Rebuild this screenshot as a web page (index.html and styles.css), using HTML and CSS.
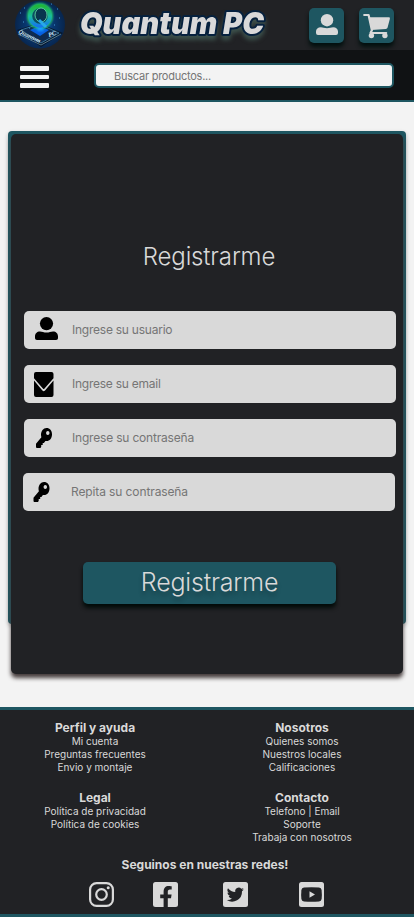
FILE: index.html
```html
<!DOCTYPE html>
<html lang="es">
<head>
<meta charset="utf-8">
<meta name="viewport" content="width=device-width, initial-scale=1">
<title>Quantum PC</title>
<link rel="stylesheet" href="styles.css">
</head>
<body>
<header class="header">
  <svg class="emblem" viewBox="0 0 50 50">
    <defs>
      <radialGradient id="orb"><stop offset="0" stop-color="#125cb8"/><stop offset=".55" stop-color="#083770"/><stop offset="1" stop-color="#08254c"/></radialGradient>
      <linearGradient id="ring" x1="0" y1="0" x2="0" y2="1"><stop offset="0" stop-color="#20b63c"/><stop offset=".5" stop-color="#19bd9d"/><stop offset="1" stop-color="#1478ea"/></linearGradient>
      <filter id="glow" x="-50%" y="-50%" width="200%" height="200%"><feGaussianBlur stdDeviation="1.3"/></filter>
      <clipPath id="round"><ellipse cx="25" cy="24.500" rx="25" ry="24"/></clipPath>
    </defs>
    <g clip-path="url(#round)">
      <rect width="50" height="50" fill="url(#orb)"/>
      <path d="M2 30 24 23l24 10-22 14Z" fill="#07172c"/>
      <path d="m6 30 18-6 20 9-18 10Z" fill="#0e2b50" stroke="#54a4cf" stroke-width=".6"/>
      <path d="m3 34 23 11 20-11" fill="none" stroke="#57798d" stroke-width="1"/>
      <path d="m15 30 9-4 10 4-9 6Z" fill="#075fe0"/>
      <g filter="url(#glow)"><circle cx="25" cy="16" r="11" fill="none" stroke="#20c76d" stroke-width="4"/><path d="m25 23-3 8h7Z" fill="#149cff"/></g>
      <circle cx="25" cy="16" r="9.8" fill="#0a4f61" stroke="url(#ring)" stroke-width="4"/>
      <ellipse cx="26" cy="15" rx="6" ry="7" fill="#09364f" stroke="#69e7a7" stroke-width=".8"/>
      <path d="m24 20 7 7" stroke="#28a9e8" stroke-width="3"/>
      <path d="M5 13h1m3-5h1m4 20h1M42 9h1m1 9h1M39 25h1M8 22h1M36 4h1" stroke="#439ad6"/>
      <text class="emblem-text" transform="translate(3 33) rotate(25)">Quantum</text>
      <text class="emblem-text" transform="translate(34 37) rotate(-18)">PC</text>
    </g>
  </svg>
  <svg class="brand" viewBox="0 0 200 50" role="img" aria-label="Quantum PC">
    <text class="brand-text" x="10" y="34" textLength="184" lengthAdjust="spacingAndGlyphs">Quantum PC</text>
  </svg>
  <div class="actions">
    <button class="action" aria-label="Cuenta"><svg viewBox="0 0 35 35"><circle cx="18" cy="12.2" r="6.2"/><path d="M7 25v-1.5c0-2.6 2-4.3 4.8-4.3 2.2 0 3.5 1 6.2 1s4-1 6.2-1c2.8 0 4.800 1.700 4.800 4.300V25q0 2-2 2H9q-2 0-2-2Z"/></svg></button>
    <button class="action" aria-label="Carrito"><svg viewBox="0 0 35 35"><path d="M10 9.300h19.800q1.400 0 1.100 1.400l-2.300 8.800q-.3 1.400-1.800 1.500l-14.300.9Z"/><path class="cart-line" d="M5.200 7h4.400l3.300 15.200-1.400 2.800h15.700"/><circle cx="12.400" cy="27.600" r="2.700"/><circle cx="25.900" cy="27.600" r="2.700"/></svg></button>
  </div>
</header>
<nav class="nav">
  <button class="menu" aria-label="Menú"><i></i><i></i><i></i></button>
  <input class="search" type="text" placeholder="Buscar productos...">
</nav>
<main class="main">
  <section class="frame">
    <form class="card">
      <h1 class="title">Registrarme</h1>
      <label class="field"><svg class="field-icon" viewBox="0 0 48 38"><circle cx="22.5" cy="12.6" r="6.6"/><path d="M11 27.2v-1.8c0-3 2-5 5-5 2.2 0 3.7 1.1 6.5 1.1s4.3-1.1 6.5-1.1c3 0 5 2 5 5v1.8q0 1.8-2 1.8H13q-2 0-2-1.8Z"/></svg><input class="w-user" type="text" placeholder="Ingrese su usuario"></label>
      <label class="field"><svg class="field-icon" viewBox="0 0 48 38"><path d="M12 7h15.500q2 0 2 2v4.200L20.300 23.700q-.600.700-1.200 0L10 13.200V9q0-2 2-2Z"/><path d="m10 15.600 8.400 9.900q1.300 1.300 2.600 0l8.500-9.900V30q0 2-2 2H12q-2 0-2-2Z"/></svg><input class="w-email" type="text" placeholder="Ingrese su email"></label>
      <label class="field"><svg class="field-icon" viewBox="0 0 48 38"><path fill-rule="evenodd" d="M22.500 9c3.300 0 5.500 2.600 5.500 6.200 0 4-2.300 6.800-5.400 6.800l-1.200-.1-1.500 2h-1.200v2h-1.500v2.200l-.8.9H13q-1 0-1-1v-3.200l5.400-6.600A7.700 7.700 0 0 1 17 16c0-4 2.300-7 5.500-7Zm1.300 3c-1 0-1.700.9-1.700 2s.7 2 1.700 2 1.700-.9 1.700-2-.7-2-1.700-2Z"/></svg><input class="w-pass" type="text" placeholder="Ingrese su contraseña"></label>
      <label class="field repeat"><svg class="field-icon" viewBox="1.500 0 48 38"><path fill-rule="evenodd" d="M22.500 9c3.300 0 5.500 2.600 5.500 6.200 0 4-2.300 6.800-5.400 6.800l-1.200-.1-1.500 2h-1.200v2h-1.500v2.200l-.8.9H13q-1 0-1-1v-3.200l5.400-6.600A7.700 7.700 0 0 1 17 16c0-4 2.300-7 5.500-7Zm1.300 3c-1 0-1.700.9-1.700 2s.7 2 1.700 2 1.700-.9 1.700-2-.7-2-1.700-2Z"/></svg><input class="w-repeat" type="text" placeholder="Repita su contraseña"></label>
      <button class="submit" type="button">Registrarme</button>
    </form>
  </section>
</main>
<footer class="footer">
  <div class="links">
    <section><h2>Perfil y ayuda</h2><p>Mi cuenta</p><p>Preguntas frecuentes</p><p>Envio y montaje</p></section>
    <section><h2>Nosotros</h2><p>Quienes somos</p><p>Nuestros locales</p><p>Calificaciones</p></section>
    <section><h2>Legal</h2><p>Política de privacidad</p><p>Política de cookies</p></section>
    <section><h2>Contacto</h2><p>Telefono | Email</p><p>Soporte</p><p>Trabaja con nosotros</p></section>
  </div>
  <h2 class="follow">Seguinos en nuestras redes!</h2>
  <div class="social">
    <svg viewBox="0 0 25 25"><rect class="line" x="1.1" y="1.1" width="22.8" height="22.8" rx="6.5"/><circle class="line" cx="12.5" cy="12.5" r="5.3"/><circle cx="19.2" cy="5.8" r="1.5"/></svg>
    <svg viewBox="0 0 25 25"><rect width="25" height="25" rx="2.5"/><path class="cut" d="M10.600 25v-8.800H7.200v-3.700h3.400V9.700c0-3.700 2-5.700 5.100-5.700 1.500 0 3 .3 3 .3v3.300H17c-1.700 0-2.200 1-2.200 2.100v2.800h3.800l-.600 3.700h-3.200V25Z"/></svg>
    <svg viewBox="0 0 25 25"><rect width="25" height="25" rx="2.5"/><path class="cut" d="M21 7.2c-.6.3-1.3.5-2 .6.7-.4 1.3-1.1 1.5-1.9-.7.4-1.4.7-2.2.8a3.5 3.5 0 0 0-6 3.2A9.9 9.9 0 0 1 5 6.2a3.5 3.5 0 0 0 1.1 4.7c-.6 0-1.1-.2-1.6-.4 0 1.7 1.2 3.1 2.8 3.4-.5.2-1 .2-1.6.1.4 1.4 1.7 2.4 3.3 2.4A7 7 0 0 1 3.8 18 9.9 9.9 0 0 0 19 9.2c.8-.5 1.5-1.200 2-2Z"/></svg>
    <svg viewBox="0 0 25 25"><rect width="25" height="25" rx="2.5"/><path class="cut" d="M5 5.600q7.500-.8 15 0 2.300.3 2.600 2.400.5 4.500 0 9-.3 2.200-2.600 2.500-7.500.7-15 0-2.300-.3-2.600-2.500-.5-4.500 0-9Q2.700 5.900 5 5.600Z"/><path d="m10.500 9.300 5.500 3.200-5.500 3.200Z"/></svg>
  </div>
</footer>
</body>
</html>
```
FILE: styles.css
```css
* { box-sizing: border-box; }
body { margin: 0; width: 414px; height: 917px; display: flex; flex-direction: column; background: #f3f3f3; font-family: Inter, "Liberation Sans", sans-serif; color: #d9d9d9; overflow: hidden; }
h1, h2, p { margin: 0; }
button { border: 0; padding: 0; font-family: inherit; color: inherit; }

.header { height: 50px; display: flex; padding-left: 15px; background: #212225; flex: none; }
.emblem { width: 50px; height: 50px; }
.emblem-text { font: italic bold 6px "Liberation Serif", serif; fill: #d9f0ff; }
.brand { width: 200px; height: 50px; margin-left: 5px; }
.brand-text { font: italic 900 30px Inter, sans-serif; fill: #d9d9d9; stroke: #06213e; stroke-width: 4px; stroke-linejoin: round; paint-order: stroke; filter: drop-shadow(0 4px 2px #49685faa); }
.actions { display: flex; gap: 15px; margin: 8px 0 0 39px; }
.action { width: 35px; height: 35px; border-radius: 5px; background: #1e5661; box-shadow: 0 4px 4px #02100f; }
.action svg { display: block; width: 35px; height: 35px; fill: #d9d9d9; }
.action .cart-line { fill: none; stroke: #d9d9d9; stroke-width: 2.200; stroke-linecap: round; stroke-linejoin: round; }

.nav { height: 52px; flex: none; display: flex; background: #101214; border-bottom: 2px solid #1e5661; padding-left: 20px; }
.menu { width: 29px; height: 22px; margin-top: 16px; background: none; display: flex; flex-direction: column; justify-content: space-between; }
.menu i { width: 29px; height: 4.600px; border-radius: 1px; background: #f3f3f3; }
.search { width: 300px; height: 25px; margin: 13px 0 0 45px; padding: 0 18px; border: 2px solid #1e5661; border-radius: 5px; background: #f3f3f3; font: 11px Inter, sans-serif; letter-spacing: -.24px; }
input::placeholder { color: #757575; opacity: 1; }

.main { height: 605px; flex: none; padding: 29px 8px 0; }
.frame { width: 398px; height: 493px; padding: 3px; background: #1e5661; border-radius: 4px; box-shadow: 0 2px 4px #0004; }
.card { width: 392px; height: 540px; display: flex; flex-direction: column; gap: 16px; padding: 108px 0 0 13px; background: #212225; border-radius: 5px; box-shadow: 0 4px 4px #453c3c; }
.title { width: 370px; height: 30px; margin-bottom: 23px; font-size: 24px; font-weight: 350; line-height: 30px; letter-spacing: -.15px; text-align: center; }
.field { width: 372px; height: 38px; flex: none; display: flex; background: #d9d9d9; border-radius: 5px; overflow: hidden; }
.repeat { margin-left: -1px; }
.field-icon { width: 48px; height: 38px; flex: none; }
.field input { border: 0; padding: 0 0 2px; background: none; width: 324px; font: 12px Inter, sans-serif; }
.field .w-user { letter-spacing: -.24px; }
.field .w-email { letter-spacing: -.25px; }
.field .w-pass { letter-spacing: -.19px; }
.field .w-repeat { letter-spacing: -.11px; }
.submit { width: 253px; height: 42px; flex: none; margin: 35px 0 0 59px; padding-bottom: 3px; border-radius: 5px; background: #1e5661; box-shadow: 0 4px 4px #020b09; font-size: 25px; font-weight: 350; letter-spacing: -.2px; text-shadow: 0 4px 4px #0004; }

.footer { height: 210px; flex: none; background: #212225; border-top: 3px solid #1e5661; border-bottom: 3px solid #1e5661; padding-top: 10px; text-align: center; }
.footer h2 { font-size: 12px; font-weight: 700; line-height: 15px; }
.footer p { font-size: 10px; line-height: 13px; }
.links { display: grid; grid-template-columns: 190px 224px; row-gap: 16px; }
.follow { width: 410px; margin-top: 13px; }
.social { display: grid; grid-template-columns: 64px 70px 76px 25px; margin: 10px 0 0 89px; }
.social svg { width: 25px; height: 25px; fill: #d9d9d9; }
.social .line { fill: none; stroke: #d9d9d9; stroke-width: 2.200; }
.social .cut { fill: #212225; }
```
